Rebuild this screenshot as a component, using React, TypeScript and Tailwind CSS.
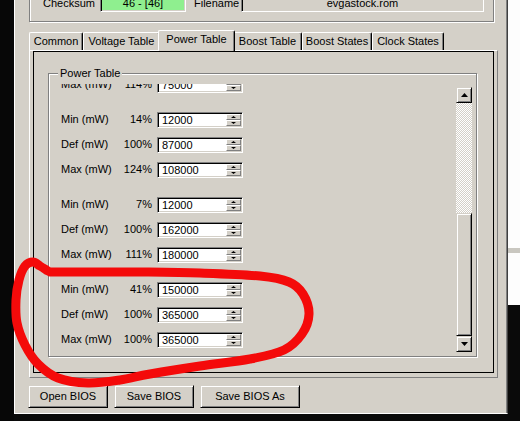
import React from "react";

const raised =
  "border border-t-[#d4d0c8] border-l-[#d4d0c8] border-r-black border-b-black shadow-[inset_1px_1px_0_#ffffff,inset_-1px_-1px_0_#808080]";
const sunken =
  "border border-t-[#808080] border-l-[#808080] border-b-white border-r-white shadow-[inset_1px_1px_0_#000000,inset_-1px_-1px_0_#d4d0c8]";

function Tri({ up, w, h }: { up?: boolean; w: number; h: number }) {
  const d = up ? `M${w / 2} 0 L${w} ${h} L0 ${h}Z` : `M0 0 L${w} 0 L${w / 2} ${h}Z`;
  return (
    <svg width={w} height={h} viewBox={`0 0 ${w} ${h}`} className="block">
      <path d={d} fill="#000" />
    </svg>
  );
}

function SpinBtn({ up }: { up?: boolean }) {
  return (
    <div className="flex h-[6px] items-center justify-center border-t border-l border-t-white border-l-white border-r border-b border-r-[#808080] border-b-[#808080] bg-[#d4d0c8]">
      <Tri up={up} w={5} h={2} />
    </div>
  );
}

function Spin({ v }: { v: string }) {
  return (
    <div className={`flex h-[16px] w-[86px] bg-white ${sunken}`}>
      <div className="flex-1 pl-[4px] text-[11px] leading-[14px]">{v}</div>
      <div className="my-[1px] mr-[1px] flex w-[15px] flex-col">
        <SpinBtn up />
        <SpinBtn />
      </div>
    </div>
  );
}

function Row({ l, p, v }: { l: string; p: string; v: string }) {
  return (
    <div className="flex h-[25px] items-center text-[11px]">
      <span className="w-[50px] whitespace-nowrap">{l}</span>
      <span className="w-[41px] text-right">{p}</span>
      <div className="ml-[5px]">
        <Spin v={v} />
      </div>
    </div>
  );
}

function ArrowBtn({ up }: { up?: boolean }) {
  return (
    <div className={`flex h-[16px] w-[16px] items-center justify-center bg-[#d4d0c8] ${raised}`}>
      <Tri up={up} w={7} h={4} />
    </div>
  );
}

function SelTab({ label }: { label: string }) {
  return (
    <div className="relative z-10 -mx-[2px] -mb-[1px] flex h-[21px] w-[77px] items-start justify-center rounded-t-[2px] border-l border-t border-r border-l-white border-t-white border-r-black bg-[#d4d0c8] pt-[2px] text-[11px] leading-[13px] shadow-[inset_-1px_0_0_#808080]">
      {label}
    </div>
  );
}

function Tab({ label, w }: { label: string; w: string }) {
  return (
    <div
      className={`flex h-[18px] ${w} items-center justify-center rounded-t-[2px] border-l border-t border-r border-l-white border-t-white border-r-black bg-[#d4d0c8] text-[11px] leading-[13px] shadow-[inset_-1px_0_0_#808080]`}
    >
      {label}
    </div>
  );
}

function redPath(pts: number[][]) {
  let d = `M${pts[0][0]} ${pts[0][1]}`;
  for (let i = 0; i < pts.length - 1; i++) {
    const p0 = pts[i - 1] || pts[i];
    const p1 = pts[i];
    const p2 = pts[i + 1];
    const p3 = pts[i + 2] || p2;
    const c1x = p1[0] + (p2[0] - p0[0]) / 6;
    const c1y = p1[1] + (p2[1] - p0[1]) / 6;
    const c2x = p2[0] - (p3[0] - p1[0]) / 6;
    const c2y = p2[1] - (p3[1] - p1[1]) / 6;
    d += ` C${c1x.toFixed(1)} ${c1y.toFixed(1)} ${c2x.toFixed(1)} ${c2y.toFixed(1)} ${p2[0]} ${p2[1]}`;
  }
  return d;
}

const RED_PTS = [
  [48, 271],
  [40, 266],
  [33, 262],
  [25, 266],
  [19, 280],
  [16, 300],
  [17, 323],
  [25, 345],
  [38, 364],
  [58, 378],
  [88, 383],
  [120, 380],
  [150, 374],
  [200, 366],
  [250, 359],
  [284, 350],
  [302, 334],
  [309, 314],
  [303, 294],
  [289, 282],
  [260, 276],
  [200, 273],
  [140, 272],
  [80, 272],
  [50, 272],
];

export default function App() {
  return (
    <div className="relative flex h-[421px] w-[520px] overflow-hidden bg-[#0a0a0a] font-['Liberation_Sans',Arial,sans-serif] text-black">
      {/* left background strip */}
      <div className="w-[14px] shrink-0 bg-[#070707]" />

      {/* window */}
      <div className="flex h-[414px] w-[494px] shrink-0 flex-col border-l border-b border-r border-l-white border-b-white border-r-[#404040] bg-[#d4d0c8] shadow-[inset_-1px_0_0_#808080]">
        {/* top group */}
        <div className="-mt-[10px] ml-[14px] h-[32px] w-[465px] border border-[#808080] shadow-[inset_1px_1px_0_#ffffff,1px_1px_0_#ffffff]">
          <div className="mt-[4px] flex h-[17px] items-center text-[11px]">
            <span className="ml-[13px] w-[57px]">Checksum</span>
            <div className={`flex h-[17px] w-[86px] items-center justify-center bg-[#8fef8f] ${sunken}`}>46 - [46]</div>
            <span className="ml-[8px] w-[47px]">Filename</span>
            <div className={`flex h-[17px] w-[243px] items-center justify-center bg-[#d4d0c8] ${sunken}`}>evgastock.rom</div>
          </div>
        </div>

        {/* tabs */}
        <div className="ml-[14px] mt-[8px] flex h-[20px] items-end">
          <Tab label="Common" w="w-[54px]" />
          <Tab label="Voltage Table" w="w-[77px]" />
          <SelTab label="Power Table" />
          <Tab label="Boost Table" w="w-[69px]" />
          <Tab label="Boost States" w="w-[70px]" />
          <Tab label="Clock States" w="w-[72px]" />
        </div>

        {/* tab page */}
        <div className="ml-[14px] h-[328px] w-[469px] border-l border-t border-r border-b border-l-white border-t-white border-r-[#808080] border-b-[#808080] pl-[3px] pr-[2px] pb-[4px]">
          <div className="h-[322px] w-[461px] border border-black pl-[14px] pt-[21px]">
            {/* group box */}
            <div className="relative h-[284px] w-[429px] border border-[#808080] shadow-[inset_1px_1px_0_#ffffff,1px_1px_0_#ffffff]">
              <span className="absolute -top-[7px] left-[9px] bg-[#d4d0c8] px-[2px] text-[11px] leading-[13px]">
                Power Table
              </span>
              <div className="flex h-full pt-[10px] pr-[4px] pb-[2px]">
                <div className="h-[269px] flex-1 overflow-hidden pl-[12px]">
                  <div className="-mt-[12px]">
                    <Row l="Max (mW)" p="114%" v="75000" />
                  </div>
                  <div className="mt-[10px]">
                    <Row l="Min (mW)" p="14%" v="12000" />
                    <Row l="Def (mW)" p="100%" v="87000" />
                    <Row l="Max (mW)" p="124%" v="108000" />
                  </div>
                  <div className="mt-[10px]">
                    <Row l="Min (mW)" p="7%" v="12000" />
                    <Row l="Def (mW)" p="100%" v="162000" />
                    <Row l="Max (mW)" p="111%" v="180000" />
                  </div>
                  <div className="mt-[10px]">
                    <Row l="Min (mW)" p="41%" v="150000" />
                    <Row l="Def (mW)" p="100%" v="365000" />
                    <Row l="Max (mW)" p="100%" v="365000" />
                  </div>
                </div>
                {/* scrollbar */}
                <div className="mt-[3px] flex h-[265px] w-[16px] flex-col">
                  <ArrowBtn up />
                  <div className="h-[110px] bg-[repeating-conic-gradient(#ffffff_0%_25%,#d4d0c8_0%_50%)] bg-[length:2px_2px]" />
                  <div className={`h-[123px] bg-[#d4d0c8] ${raised}`} />
                  <ArrowBtn />
                </div>
              </div>
            </div>
          </div>
        </div>

        {/* buttons */}
        <div className="ml-[13px] mt-[7px] flex gap-[6px] text-[11px]">
          <button className={`h-[23px] w-[80px] bg-[#d4d0c8] ${raised}`}>Open BIOS</button>
          <button className={`h-[23px] w-[80px] bg-[#d4d0c8] ${raised}`}>Save BIOS</button>
          <button className={`h-[23px] w-[100px] bg-[#d4d0c8] ${raised}`}>Save BIOS As</button>
        </div>
      </div>

      {/* right background strip */}
      <div className="flex w-[12px] shrink-0 flex-col">
        <div className="h-[248px] bg-[#fdfdfd]" />
        <div className="h-[5px] bg-[#c9c7c0]" />
        <div className="h-[52px] bg-[#fdfdfd]" />
        <div className="flex-1 bg-[#0a0a0a]" />
      </div>

      {/* red annotation */}
      <svg className="pointer-events-none absolute left-0 top-0" width={520} height={421} viewBox="0 0 520 421">
        <path d={redPath(RED_PTS)} fill="none" stroke="#f40a0a" strokeWidth={9} strokeLinecap="round" strokeLinejoin="round" />
      </svg>
    </div>
  );
}
